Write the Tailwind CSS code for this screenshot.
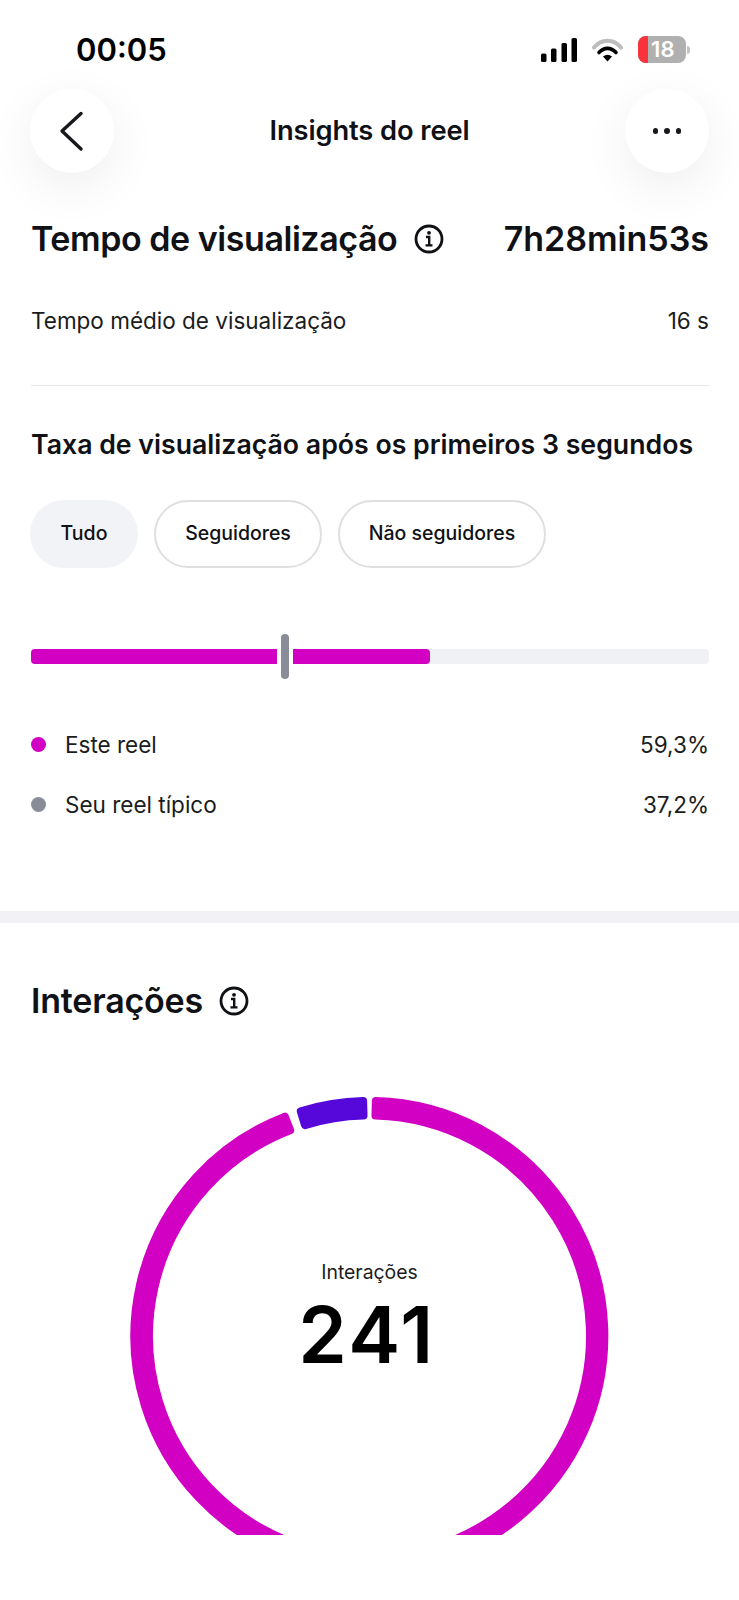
<!doctype html>
<html lang="pt">
<head>
<meta charset="utf-8">
<script src="https://cdn.jsdelivr.net/npm/@tailwindcss/browser@4"></script>
</head>
<body class="bg-white">
<div class="relative w-[739px] h-[1600px] overflow-hidden bg-white font-['Inter',sans-serif] text-[#0f1115]">
  <div class="h-[89px] pt-[36px] pl-[76px] pr-[49px] flex items-start justify-between">
    <span class="h-[27px] leading-[27px] text-[31px] font-semibold text-black">00:05</span>
    <div class="flex items-center h-[27px] gap-[15px]">
      <svg class="w-[36px] h-[24px]" viewBox="0 0 36 24" fill="#000"><rect x="0" y="15.5" width="5.5" height="8.5" rx="1.6"/><rect x="10" y="10.5" width="5.5" height="13.5" rx="1.6"/><rect x="20.5" y="5" width="5.5" height="19" rx="1.6"/><rect x="30.5" y="0" width="5.5" height="24" rx="1.6"/></svg>
      <svg class="w-[31px] h-[24px]" viewBox="0 0 31 24" fill="none"><path d="M2 9.5C9.5 .5 21.5 .5 29 9.5" stroke="#bdbdbd" stroke-width="4" stroke-linecap="round"/><path d="M7 14.5C12 9 19 9 24 14.5" stroke="#000" stroke-width="3.6" stroke-linecap="round"/><path d="M11 18.5Q15.5 15 20 18.5L15.5 23.5Z" fill="#000"/></svg>
      <div class="flex items-center gap-[1.5px]">
        <div class="relative w-[48px] h-[27px] rounded-[8px] overflow-hidden bg-[#b0b0b0] flex items-center justify-end pr-[11px]">
          <div class="absolute left-0 top-0 bottom-0 w-[10px] bg-[#f8333c]"></div>
          <span class="relative text-[22px] leading-[27px] font-semibold text-white">18</span>
        </div>
        <div class="w-[3px] h-[8px] rounded-r-full bg-[#c4c4c4]"></div>
      </div>
    </div>
  </div>

  <div class="h-[84px] pl-[30px] pr-[30px] flex items-center justify-between">
    <div class="w-[84px] h-[84px] rounded-full bg-white shadow-[0_14px_50px_rgba(0,0,0,0.07)] flex items-center justify-center">
      <svg class="w-[84px] h-[84px]" viewBox="0 0 84 84" fill="none"><path d="M51 24.5 L32 42 L51 60" stroke="#16181c" stroke-width="3.4" stroke-linecap="round" stroke-linejoin="round"/></svg>
    </div>
    <span class="text-[27.3px] font-semibold leading-[32px] tracking-[-0.1px]">Insights do reel</span>
    <div class="w-[84px] h-[84px] rounded-full bg-white shadow-[0_14px_50px_rgba(0,0,0,0.07)] flex items-center justify-center gap-[6px]">
      <span class="w-[5.5px] h-[5.5px] rounded-full bg-[#16181c]"></span>
      <span class="w-[5.5px] h-[5.5px] rounded-full bg-[#16181c]"></span>
      <span class="w-[5.5px] h-[5.5px] rounded-full bg-[#16181c]"></span>
    </div>
  </div>

  <div class="pl-[31px] pr-[30px]">
    <div class="mt-[46px] h-[40px] flex items-center justify-between">
      <div class="flex items-center gap-[17px]">
        <h2 class="text-[34px] leading-[40px] font-semibold tracking-[-0.45px]">Tempo de visualização</h2>
        <svg class="w-[30px] h-[30px] -mt-[1px]" viewBox="0 0 30 30" fill="none"><circle cx="15" cy="15" r="13" stroke="#0f1115" stroke-width="2.8"/><circle cx="15" cy="8.8" r="1.9" fill="#0f1115"/><path d="M12 13h3.2v8M11.5 21.4h7" stroke="#0f1115" stroke-width="2.4"/></svg>
      </div>
      <span class="text-[34px] leading-[40px] font-semibold">7h28min53s</span>
    </div>

    <div class="mt-[47px] h-[30px] flex items-center justify-between text-[22.5px] leading-[30px] text-[#1a1c20]">
      <span>Tempo médio de visualização</span>
      <span>16 s</span>
    </div>

    <div class="mt-[49px] h-px bg-[#e8e8ea]"></div>

    <h3 class="mt-[41px] h-[34px] text-[26.7px] leading-[34px] font-semibold whitespace-nowrap">Taxa de visualização após os primeiros 3 segundos</h3>

    <div class="mt-[39px] flex gap-[16px] text-[19.5px] font-[550] -ml-px">
      <div class="w-[108px] h-[68px] rounded-[34px] bg-[#f2f3f6] flex items-center justify-center">Tudo</div>
      <div class="w-[168px] h-[68px] rounded-[34px] border-2 border-[#dfdfdf] flex items-center justify-center">Seguidores</div>
      <div class="w-[208px] h-[68px] rounded-[34px] border-2 border-[#dfdfdf] flex items-center justify-center">Não seguidores</div>
    </div>

    <div class="relative mt-[80.5px] h-[15px] rounded-[4px] bg-[#f0f1f5]">
      <div class="h-full w-[399px] rounded-[4px] bg-[#d200c2]"></div>
      <div class="absolute left-[246px] top-[-15px] w-[15.5px] h-[45px] bg-white flex justify-center">
        <div class="w-[7.5px] h-full rounded-full bg-[#898d98]"></div>
      </div>
    </div>

    <div class="mt-[66px] h-[30px] flex items-center justify-between text-[22.5px] leading-[30px] text-[#1a1c20]">
      <div class="flex items-center gap-[19px]"><span class="w-[15px] h-[15px] rounded-full bg-[#d200c2]"></span><span>Este reel</span></div>
      <span>59,3%</span>
    </div>
    <div class="mt-[30px] h-[30px] flex items-center justify-between text-[22.5px] leading-[30px] text-[#1a1c20]">
      <div class="flex items-center gap-[19px]"><span class="w-[15px] h-[15px] rounded-full bg-[#898d98]"></span><span>Seu reel típico</span></div>
      <span>37,2%</span>
    </div>
  </div>

  <div class="mt-[91.5px] h-[11.5px] bg-[#f1f1f6]"></div>

  <div class="pl-[31px] mt-[58px] h-[40px] flex items-center gap-[16px]">
    <h2 class="text-[34px] leading-[40px] font-semibold tracking-[-0.2px]">Interações</h2>
    <svg class="w-[30px] h-[30px]" viewBox="0 0 30 30" fill="none"><circle cx="15" cy="15" r="13" stroke="#0f1115" stroke-width="2.8"/><circle cx="15" cy="8.8" r="1.9" fill="#0f1115"/><path d="M12 13h3.2v8M11.5 21.4h7" stroke="#0f1115" stroke-width="2.4"/></svg>
  </div>

  <div class="relative mt-[69px]">
    <svg class="block w-[739px] h-[445px]" viewBox="0 1090 739 445">
      <path d="M375.86 1101.09 A235 235 0 1 1 284.9 1116.7 L290.1 1130.3 A220.5 220.5 0 1 0 375.46 1115.58 Z" fill="#d200c2" stroke="#d200c2" stroke-width="8" stroke-linejoin="round"/>
      <path d="M300.8 1111.3 A235 235 0 0 1 363.14 1101.09 L363.54 1115.58 A220.5 220.5 0 0 0 305 1125.1 Z" fill="#5607da" stroke="#5607da" stroke-width="8" stroke-linejoin="round"/>
    </svg>
    <div class="absolute left-0 right-0 top-[170px] flex flex-col items-center">
      <span class="h-[24px] text-[19.4px] leading-[24px] text-[#1a1c20]">Interações</span>
      <span class="mt-[9px] pr-[5px] text-[78px] leading-[84px] font-semibold tracking-[2.5px] text-black">241</span>
    </div>
  </div>
</div>
</body>
</html>
